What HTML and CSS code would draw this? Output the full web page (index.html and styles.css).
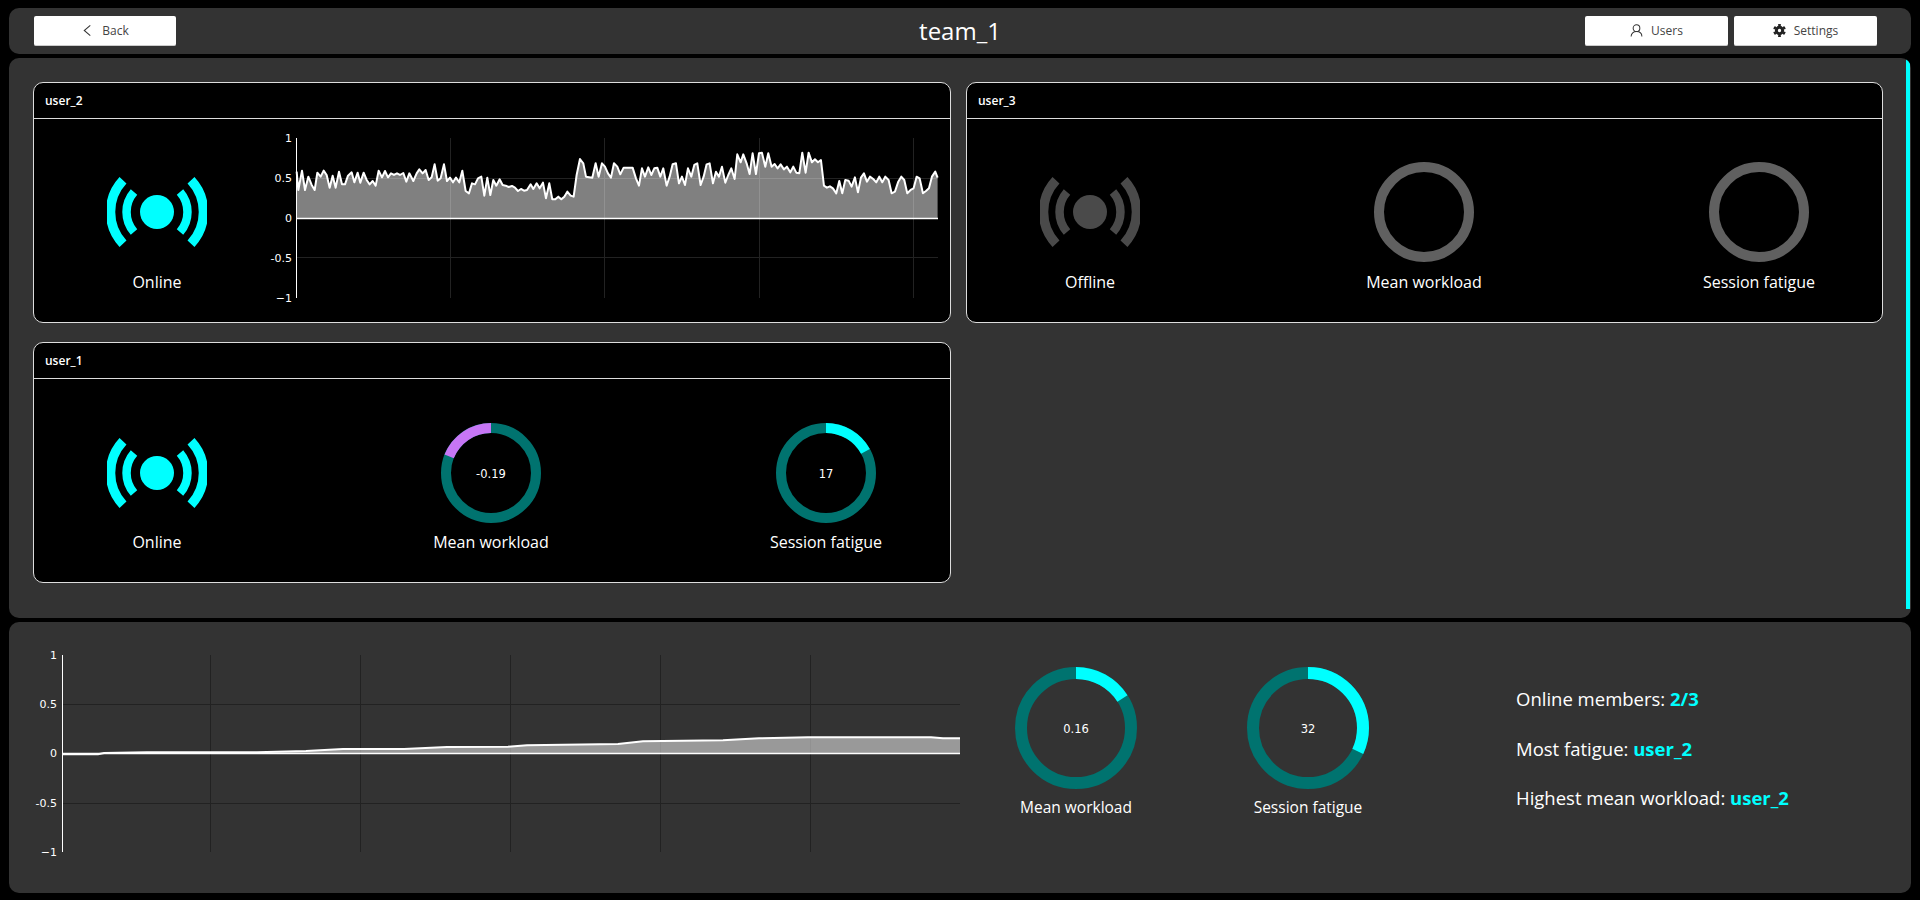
FILE: index.html
```html
<!DOCTYPE html>
<html lang="en">
<head>
  <meta charset="UTF-8">
  <title>team_1</title>
  <meta name="viewport" content="width=device-width, initial-scale=1.0">
  <link rel="stylesheet" href="styles.css">
</head>
<body>
  <svg class="defs">
    <symbol id="signal" viewBox="0 0 100 100">
      <circle class="signal-dot" cx="50" cy="50" r="17"/>
      <path class="signal-inner" d="M27 30A30.5 30.5 0 0 0 27 70M73 30A30.5 30.5 0 0 1 73 70"/>
      <path class="signal-outer" d="M16 18.3A46.5 46.5 0 0 0 16 81.7M84 18.3A46.5 46.5 0 0 1 84 81.7"/>
    </symbol>
  </svg>

  <header class="topbar">
    <div class="topbar-left">
      <button class="btn btn-back">
        <svg class="btn-icon" viewBox="0 0 14 14"><path class="icon-line" d="M10 1.5L3.5 7L10 12.5"/></svg>
        Back
      </button>
    </div>
    <h1 class="team-name">team_1</h1>
    <div class="topbar-right">
      <button class="btn">
        <svg class="btn-icon" viewBox="0 0 14 14">
          <circle class="icon-line" cx="7" cy="4.5" r="3.6"/>
          <path class="icon-line" d="M1.2 13.5C1.2 10 3.8 8.1 7 8.1S12.8 10 12.8 13.5"/>
        </svg>
        Users
      </button>
      <button class="btn">
        <svg class="btn-icon" viewBox="0 0 14 14">
          <circle class="gear-teeth" cx="7" cy="7" r="5.7" pathLength="24"/>
          <circle class="gear-body" cx="7" cy="7" r="3.4"/>
        </svg>
        Settings
      </button>
    </div>
  </header>

  <main class="members">
    <div class="scroll-thumb"></div>
    <div class="member-grid">

      <!-- user_2 has a live chart instead of gauges -->
      <section class="card">
        <div class="card-title">user_2</div>
        <div class="card-body card-body-chart">
          <div class="stat">
            <svg class="signal"><use href="#signal"/></svg>
            <div class="stat-label">Online</div>
          </div>
          <svg class="member-chart">
            <g class="grid-lines">
              <path d="M169.500 13V173M323.500 13V173M478.500 13V173M632.500 13V173M15 53.500H657M15 132.500H657"/>
            </g>
            <g transform="translate(-11 0) scale(.3333)">
              <polygon class="trace-fill" points="80,280 80,140 85,195 96,137 105,195 115,155 125,180 134,195 142,143 152,155 161,137 170,150 179,188 188,152 197,188 207,140 216,178 225,178 234,152 245,142 253,172 263,143 271,173 281,143 290,165 299,178 308,168 317,182 326,137 336,157 345,138 354,157 363,145 372,150 381,145 390,150 400,144 409,170 418,145 430,168 440,145 448,133 458,145 467,135 476,165 485,157 494,118 503,167 512,160 522,118 531,168 540,158 549,172 558,158 568,172 577,137 587,198 597,205 606,175 615,178 624,160 634,155 643,212 652,158 661,210 670,165 679,182 689,163 698,180 707,182 716,186 726,183 735,188 744,198 753,192 762,197 771,195 782,178 790,192 800,175 809,190 819,173 828,220 838,175 847,223 856,223 865,215 874,223 883,215 892,200 902,212 911,215 920,150 930,102 940,115 948,155 967,158 977,115 986,155 996,115 1005,125 1014,145 1023,158 1032,115 1042,125 1051,148 1061,128 1088,128 1098,160 1107,182 1116,130 1125,155 1135,127 1144,150 1153,130 1162,128 1171,155 1180,130 1190,182 1199,155 1208,118 1218,115 1227,175 1236,155 1245,180 1254,130 1264,155 1273,120 1282,115 1292,180 1301,155 1310,118 1319,115 1329,175 1338,140 1347,155 1356,125 1366,173 1375,150 1384,130 1394,162 1402,88 1412,112 1420,88 1430,115 1439,147 1448,85 1458,147 1467,85 1476,83 1486,125 1495,85 1505,125 1514,117 1523,130 1532,118 1542,133 1551,125 1561,142 1570,125 1579,143 1588,145 1597,83 1607,143 1616,83 1626,112 1635,103 1644,112 1653,105 1662,182 1671,188 1680,184 1689,190 1699,205 1708,168 1717,205 1726,165 1736,167 1745,185 1755,157 1764,202 1773,158 1782,145 1791,170 1800,155 1810,162 1819,172 1828,155 1837,172 1846,155 1856,165 1865,205 1875,200 1885,170 1894,155 1903,165 1912,205 1922,195 1931,190 1940,155 1949,160 1959,205 1968,198 1977,190 1986,155 1996,140 2003,158 2003,280"/>
              <polyline class="trace-line" points="80,140 85,195 96,137 105,195 115,155 125,180 134,195 142,143 152,155 161,137 170,150 179,188 188,152 197,188 207,140 216,178 225,178 234,152 245,142 253,172 263,143 271,173 281,143 290,165 299,178 308,168 317,182 326,137 336,157 345,138 354,157 363,145 372,150 381,145 390,150 400,144 409,170 418,145 430,168 440,145 448,133 458,145 467,135 476,165 485,157 494,118 503,167 512,160 522,118 531,168 540,158 549,172 558,158 568,172 577,137 587,198 597,205 606,175 615,178 624,160 634,155 643,212 652,158 661,210 670,165 679,182 689,163 698,180 707,182 716,186 726,183 735,188 744,198 753,192 762,197 771,195 782,178 790,192 800,175 809,190 819,173 828,220 838,175 847,223 856,223 865,215 874,223 883,215 892,200 902,212 911,215 920,150 930,102 940,115 948,155 967,158 977,115 986,155 996,115 1005,125 1014,145 1023,158 1032,115 1042,125 1051,148 1061,128 1088,128 1098,160 1107,182 1116,130 1125,155 1135,127 1144,150 1153,130 1162,128 1171,155 1180,130 1190,182 1199,155 1208,118 1218,115 1227,175 1236,155 1245,180 1254,130 1264,155 1273,120 1282,115 1292,180 1301,155 1310,118 1319,115 1329,175 1338,140 1347,155 1356,125 1366,173 1375,150 1384,130 1394,162 1402,88 1412,112 1420,88 1430,115 1439,147 1448,85 1458,147 1467,85 1476,83 1486,125 1495,85 1505,125 1514,117 1523,130 1532,118 1542,133 1551,125 1561,142 1570,125 1579,143 1588,145 1597,83 1607,143 1616,83 1626,112 1635,103 1644,112 1653,105 1662,182 1671,188 1680,184 1689,190 1699,205 1708,168 1717,205 1726,165 1736,167 1745,185 1755,157 1764,202 1773,158 1782,145 1791,170 1800,155 1810,162 1819,172 1828,155 1837,172 1846,155 1856,165 1865,205 1875,200 1885,170 1894,155 1903,165 1912,205 1922,195 1931,190 1940,155 1949,160 1959,205 1968,198 1977,190 1986,155 1996,140 2003,158"/>
            </g>
            <path class="axis-line" d="M15.500 13V173"/>
            <path class="zero-line" d="M15 93.500H657"/>
            <text class="tick" x="11" y="13">1</text>
            <text class="tick" x="11" y="53">0.5</text>
            <text class="tick" x="11" y="93">0</text>
            <text class="tick" x="11" y="133">-0.5</text>
            <text class="tick" x="11" y="173">−1</text>
          </svg>
        </div>
      </section>

      <section class="card">
        <div class="card-title">user_3</div>
        <div class="card-body">
          <div class="stat stat-off">
            <svg class="signal"><use href="#signal"/></svg>
            <div class="stat-label">Offline</div>
          </div>
          <div class="stat">
            <svg class="ring" viewBox="0 0 100 100"><circle class="ring-empty" cx="50" cy="50" r="45"/></svg>
            <div class="stat-label">Mean workload</div>
          </div>
          <div class="stat">
            <svg class="ring" viewBox="0 0 100 100"><circle class="ring-empty" cx="50" cy="50" r="45"/></svg>
            <div class="stat-label">Session fatigue</div>
          </div>
        </div>
      </section>

      <section class="card">
        <div class="card-title">user_1</div>
        <div class="card-body card-body-low">
          <div class="stat">
            <svg class="signal"><use href="#signal"/></svg>
            <div class="stat-label">Online</div>
          </div>
          <div class="stat">
            <svg class="ring" viewBox="0 0 100 100">
              <circle class="ring-track" cx="50" cy="50" r="45"/>
              <circle class="ring-value ring-negative" cx="50" cy="50" r="45" pathLength="100" stroke-dasharray="19 81"/>
              <text class="ring-text" x="50" y="51">-0.19</text>
            </svg>
            <div class="stat-label">Mean workload</div>
          </div>
          <div class="stat">
            <svg class="ring" viewBox="0 0 100 100">
              <circle class="ring-track" cx="50" cy="50" r="45"/>
              <circle class="ring-value" cx="50" cy="50" r="45" pathLength="100" stroke-dasharray="17 83"/>
              <text class="ring-text" x="50" y="51">17</text>
            </svg>
            <div class="stat-label">Session fatigue</div>
          </div>
        </div>
      </section>

    </div>
  </main>

  <!-- team totals -->
  <footer class="summary">
    <svg class="team-chart">
      <g class="grid-lines">
        <path d="M148.500 0V197M298.500 0V197M448.500 0V197M598.500 0V197M748.500 0V197M0 49.500H898M0 148.500H898"/>
      </g>
      <polygon class="trace-fill" points="0,98 0,99.300 36,99.300 42,98 85,97.300 195,97.300 244,96 281,94 342,94 385,92 446,91.700 465,90.300 556,89 581,86.300 661,85.300 697,83.300 746,82.300 869,82.300 881,83.300 898,83.300 898,98"/>
      <polyline class="team-line" points="0,99.300 36,99.300 42,98 85,97.300 195,97.300 244,96 281,94 342,94 385,92 446,91.700 465,90.300 556,89 581,86.300 661,85.300 697,83.300 746,82.300 869,82.300 881,83.300 898,83.300"/>
      <path class="axis-line" d="M.5 0V197"/>
      <path class="zero-line" d="M0 98.500H898"/>
      <text class="tick" x="-5" y="0">1</text>
      <text class="tick" x="-5" y="49">0.5</text>
      <text class="tick" x="-5" y="98">0</text>
      <text class="tick" x="-5" y="148">-0.5</text>
      <text class="tick" x="-5" y="197">−1</text>
    </svg>

    <div class="team-gauges">
      <div class="stat team-stat">
        <svg class="team-ring" viewBox="0 0 122 122">
          <circle class="team-track" cx="61" cy="61" r="55"/>
          <circle class="team-value" cx="61" cy="61" r="55" pathLength="100" stroke-dasharray="16 84"/>
          <text class="team-text" x="61" y="62">0.16</text>
        </svg>
        <div class="stat-label">Mean workload</div>
      </div>
      <div class="stat team-stat">
        <svg class="team-ring" viewBox="0 0 122 122">
          <circle class="team-track" cx="61" cy="61" r="55"/>
          <circle class="team-value" cx="61" cy="61" r="55" pathLength="100" stroke-dasharray="32 68"/>
          <text class="team-text" x="61" y="62">32</text>
        </svg>
        <div class="stat-label">Session fatigue</div>
      </div>
    </div>

    <div class="team-facts">
      <p>Online members: <b>2/3</b></p>
      <p>Most fatigue: <b>user_2</b></p>
      <p>Highest mean workload: <b>user_2</b></p>
    </div>
  </footer>
</body>
</html>
```

FILE: styles.css
```css
* { box-sizing: border-box; }
html, body { margin: 0; height: 100%; }
body { background: #000; color: #fff; font-family: "Open Sans", "Noto Sans", sans-serif; padding: 8px 9px 7px; display: flex; flex-direction: column; gap: 4px; overflow: hidden; }
.defs { display: none; }

/* top bar */
.topbar { flex: 0 0 46px; background: #333; border-radius: 10px; padding: 8px 25px; display: grid; grid-template-columns: 1fr auto 1fr; align-items: center; }
.team-name { margin: 0; font-size: 24px; font-weight: 400; line-height: 30px; }
.topbar-right { display: flex; justify-content: flex-end; gap: 6px; margin-right: 9px; }
.btn { width: 143px; height: 30px; border: none; border-bottom: 1px solid #ccc; border-radius: 2px; background: #fff; color: #444; font-family: inherit; font-size: 12px; display: flex; align-items: center; justify-content: center; gap: 8px; padding: 0; }
.btn-back { width: 142px; }
.btn-icon { width: 13px; height: 13px; }
.icon-line { fill: none; stroke: #333; stroke-width: 1.1; }
.gear-teeth { fill: none; stroke: #222; stroke-width: 2.4; stroke-dasharray: 2 2; stroke-dashoffset: -1; }
.gear-body { fill: none; stroke: #222; stroke-width: 3.2; }

/* member cards */
.members { position: relative; flex: 0 0 560px; background: #333; border-radius: 10px; padding: 24px 28px 0 24px; overflow: hidden; }
.scroll-thumb { position: absolute; top: 1px; right: 1px; width: 4px; height: 550px; background: #0ff; }
.member-grid { display: grid; grid-template-columns: 918px 917px; gap: 19px 15px; }
.card { height: 241px; background: #000; border: 1px solid #ddd; border-radius: 10px; }
.card-title { height: 36px; padding: 0 11px; border-bottom: 1px solid #ddd; font-size: 12px; font-weight: 600; line-height: 36px; }
.card-body { display: grid; grid-template-columns: 246px 246px 248px; column-gap: 88px; padding-top: 43px; }
.card-body-chart { grid-template-columns: 246px 1fr; column-gap: 1px; padding-top: 0; }
.card-body-chart .stat { padding-top: 43px; }
.card-body-low { padding-top: 44px; }
.card-body-low .stat-label { margin-top: 8px; }
.stat { display: flex; flex-direction: column; align-items: center; }
.stat-label { margin-top: 9px; font-size: 16px; line-height: 22px; }

/* the <use> shadow tree only inherits, so the colour comes in through color */
.signal { display: block; width: 100px; height: 100px; color: #0ff; }
.stat-off .signal { color: #4a4a4a; }
.signal-dot { fill: currentColor; }
.signal-inner { fill: none; stroke: currentColor; stroke-width: 8.5; }
.signal-outer { fill: none; stroke: currentColor; stroke-width: 9.5; }

/* gauges */
.ring { display: block; width: 100px; height: 100px; }
.ring-empty { fill: none; stroke: #606060; stroke-width: 10; }
.ring-track { fill: none; stroke: #00736f; stroke-width: 10; }
.ring-value { fill: none; stroke: #0ff; stroke-width: 10; transform: rotate(-90deg); transform-origin: 50px 50px; }
.ring-negative { stroke: #c776f5; transform: rotate(-90deg) scaleY(-1); }
.ring-text { fill: #fff; font-family: "DejaVu Sans", sans-serif; font-size: 11.500px; text-anchor: middle; dominant-baseline: central; }

/* charts */
.member-chart { display: block; width: 657px; height: 190px; margin-top: 6px; overflow: visible; }
.team-chart { display: block; flex: 0 0 898px; width: 898px; height: 197px; overflow: visible; }
.grid-lines path { fill: none; stroke: #222; stroke-width: 1; }
.trace-fill { fill: rgba(255, 255, 255, .5); }
.trace-line { fill: none; stroke: #fff; stroke-width: 6; stroke-linejoin: round; }
.team-line { fill: none; stroke: #fff; stroke-width: 2; }
.axis-line { fill: none; stroke: #fff; stroke-width: 1; }
.zero-line { fill: none; stroke: #fff; stroke-width: 1.500; }
.tick { fill: #fff; font-family: "DejaVu Sans", sans-serif; font-size: 11px; text-anchor: end; dominant-baseline: central; }

/* team summary */
.summary { flex: 0 0 271px; background: #333; border-radius: 10px; padding: 33px 0 0 53px; display: flex; align-items: flex-start; }
.team-gauges { display: flex; gap: 110px; margin: 12px 0 0 55px; }
.team-stat { width: 122px; }
.team-stat .stat-label { margin-top: 7px; font-size: 15.500px; white-space: nowrap; }
.team-ring { display: block; width: 122px; height: 122px; }
.team-track { fill: none; stroke: #00736f; stroke-width: 12; }
.team-value { fill: none; stroke: #0ff; stroke-width: 12; transform: rotate(-90deg); transform-origin: 61px 61px; }
.team-text { fill: #fff; font-family: "DejaVu Sans", sans-serif; font-size: 11.500px; text-anchor: middle; dominant-baseline: central; }
.team-facts { margin: 30px 0 0 147px; font-size: 18.500px; line-height: 27px; }
.team-facts p { margin: 0 0 22.500px; white-space: nowrap; }
.team-facts b { color: #0ff; font-weight: 700; }
```
